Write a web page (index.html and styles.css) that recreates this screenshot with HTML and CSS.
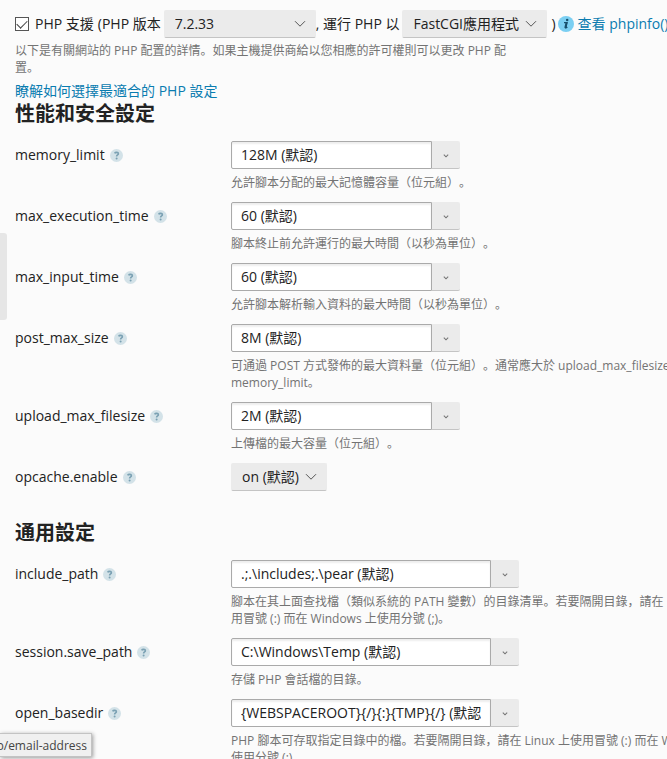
FILE: index.html
```html
<!DOCTYPE html>
<html lang="zh">
<head>
<meta charset="utf-8">
<title>PHP 設定</title>
<link rel="stylesheet" href="styles.css">
</head>
<body>
<svg class="defs" aria-hidden="true">
  <symbol id="chevron" viewBox="0 0 12 8"><path d="M1 1.2l5 5 5-5" fill="none" stroke="#555" stroke-width="1"/></symbol>
  <symbol id="caret" viewBox="0 0 6 4"><path d="M.8 .7L3 2.8 5.2 .7" fill="none" stroke="#777" stroke-width="1.1"/></symbol>
  <symbol id="help" viewBox="0 0 13 13"><circle cx="6.5" cy="6.5" r="6.5" fill="#d3e2e8"/><path d="M4.6 4.4C5.4 3 8.4 3 8.4 4.8c0 1.2-1.8 1.2-1.8 2.7" fill="none" stroke="#7ba1b3" stroke-width="1.6"/><circle cx="6.6" cy="9.4" r="1" fill="#7ba1b3"/></symbol>
  <symbol id="info" viewBox="0 0 16 16"><circle cx="8" cy="8" r="8" fill="#7bcff2"/><circle cx="9.2" cy="4.1" r="1.25" fill="#174f6c"/><path d="M6 6.7h3.1L7.7 11.9q.8 0 1.6-.9" fill="none" stroke="#174f6c" stroke-width="1.3"/><path d="M8.4 6.8L7.2 12" stroke="#174f6c" stroke-width="1.8"/></symbol>
</svg>
<main class="page">
  <div class="support">
    <input class="check" type="checkbox" id="php" checked>
    <label class="support-label" for="php">PHP 支援</label>
    <label class="before-select" for="version">(PHP 版本</label>
    <span class="select version"><select id="version"><option>7.2.33</option></select><svg><use href="#chevron"/></svg></span>
    <label class="before-select" for="handler">, 運行 PHP 以</label>
    <span class="select handler"><select id="handler"><option>FastCGI應用程式</option></select><svg><use href="#chevron"/></svg></span>
    <span class="close">)</span>
    <svg class="info"><use href="#info"/></svg>
    <a href="#phpinfo">查看 phpinfo()</a>
  </div>
  <p class="hint intro">以下是有關網站的 PHP 配置的詳情。如果主機提供商給以您相應的許可權則可以更改 PHP 配置。</p>
  <a class="learn" href="#learn">瞭解如何選擇最適合的 PHP 設定</a>

  <section>
    <h2>性能和安全設定</h2>
    <div class="row">
      <div class="name"><label for="memory">memory_limit</label><svg><use href="#help"/></svg></div>
      <div><div class="combo"><input id="memory" value="128M (默認)"><button aria-label="選項"><svg><use href="#caret"/></svg></button></div>
      <p class="hint">允許腳本分配的最大記憶體容量（位元組）。</p></div>
    </div>
    <div class="row">
      <div class="name"><label for="exec">max_execution_time</label><svg><use href="#help"/></svg></div>
      <div><div class="combo"><input id="exec" value="60 (默認)"><button aria-label="選項"><svg><use href="#caret"/></svg></button></div>
      <p class="hint">腳本終止前允許運行的最大時間（以秒為單位）。</p></div>
    </div>
    <div class="row">
      <div class="name"><label for="inputtime">max_input_time</label><svg><use href="#help"/></svg></div>
      <div><div class="combo"><input id="inputtime" value="60 (默認)"><button aria-label="選項"><svg><use href="#caret"/></svg></button></div>
      <p class="hint">允許腳本解析輸入資料的最大時間（以秒為單位）。</p></div>
    </div>
    <div class="row">
      <div class="name"><label for="post">post_max_size</label><svg><use href="#help"/></svg></div>
      <div><div class="combo"><input id="post" value="8M (默認)"><button aria-label="選項"><svg><use href="#caret"/></svg></button></div>
      <p class="hint">可通過 POST 方式發佈的最大資料量（位元組）。通常應大於 upload_max_filesize<br>memory_limit。</p></div>
    </div>
    <div class="row">
      <div class="name"><label for="upload">upload_max_filesize</label><svg><use href="#help"/></svg></div>
      <div><div class="combo"><input id="upload" value="2M (默認)"><button aria-label="選項"><svg><use href="#caret"/></svg></button></div>
      <p class="hint">上傳檔的最大容量（位元組）。</p></div>
    </div>
    <div class="row">
      <div class="name"><label for="opcache">opcache.enable</label><svg><use href="#help"/></svg></div>
      <div><span class="select opcache"><select id="opcache"><option>on (默認)</option></select><svg><use href="#chevron"/></svg></span></div>
    </div>
  </section>

  <section class="general">
    <h2>通用設定</h2>
    <div class="row">
      <div class="name"><label for="include">include_path</label><svg><use href="#help"/></svg></div>
      <div><div class="combo wide"><input id="include" value=".;.\includes;.\pear (默認)"><button aria-label="選項"><svg><use href="#caret"/></svg></button></div>
      <p class="hint">腳本在其上面查找檔（類似系統的 PATH 變數）的目錄清單。若要隔開目錄，請在<br>用冒號 (:) 而在 Windows 上使用分號 (;)。</p></div>
    </div>
    <div class="row">
      <div class="name"><label for="session">session.save_path</label><svg><use href="#help"/></svg></div>
      <div><div class="combo wide"><input id="session" value="C:\Windows\Temp (默認)"><button aria-label="選項"><svg><use href="#caret"/></svg></button></div>
      <p class="hint">存儲 PHP 會話檔的目錄。</p></div>
    </div>
    <div class="row">
      <div class="name"><label for="basedir">open_basedir</label><svg><use href="#help"/></svg></div>
      <div><div class="combo wide"><input id="basedir" value="{WEBSPACEROOT}{/}{:}{TMP}{/} (默認)"><button aria-label="選項"><svg><use href="#caret"/></svg></button></div>
      <p class="hint">PHP 腳本可存取指定目錄中的檔。若要隔開目錄，請在 Linux 上使用冒號 (:) 而在 W<br>使用分號 (;)。</p></div>
    </div>
  </section>
</main>
<div class="side-tab"></div>
<div class="status"><span>ab/email-address</span></div>
</body>
</html>
```
FILE: styles.css
```css
* { box-sizing: border-box; }
body {
  margin: 0;
  height: 100vh;
  overflow: hidden;
  background: #fbfbfb;
  color: #222;
  font: 14px/20px "Open Sans", "Noto Sans CJK SC", sans-serif;
  text-spacing-trim: space-all;
}
input, select, button { font: inherit; color: inherit; margin: 0; }
a { color: #0a7cb0; text-decoration: none; }
p, h2 { margin: 0; }
.defs { position: absolute; width: 0; height: 0; }
.page { padding: 10px 0 0 15px; }

.support { display: flex; align-items: center; height: 28px; white-space: nowrap; }
.support > * { flex: none; }
.check {
  appearance: none;
  width: 14px;
  height: 14px;
  border: 1px solid #555;
  background: #fff;
  display: grid;
  place-items: center;
}
.check:checked::before {
  content: "";
  width: 9px;
  height: 5px;
  border: solid #444;
  border-width: 0 0 1px 1px;
  transform: translateY(-1px) rotate(-45deg);
}
.support-label { margin: 0 4px 0 6px; }
.before-select { margin-right: 3px; }
.close { margin: 0 2px 0 4px; }
.info { width: 16px; height: 16px; margin-right: 4px; }

.select { position: relative; display: inline-block; height: 28px; vertical-align: top; }
.select select {
  appearance: none;
  width: 100%;
  height: 28px;
  padding: 0 10px;
  border: 1px solid #ebebeb;
  border-bottom-color: #c4c4c4;
  border-radius: 2px;
  background: #ebebeb;
}
.select svg {
  position: absolute;
  right: 10px;
  top: 10px;
  width: 12px;
  height: 8px;
  pointer-events: none;
}
.version { width: 152px; }
.handler { width: 145px; }
.opcache { width: 96px; }

.hint { color: #737373; font-size: 12px; line-height: 17px; white-space: nowrap; }
.intro { max-width: 500px; margin-top: 4px; white-space: normal; }
.learn { display: block; margin-top: 5px; }
h2 { font-size: 20px; font-weight: 700; line-height: 26px; margin-bottom: 14px; }
.general { padding-top: 18px; }

.row { display: grid; grid-template-columns: 216px 1fr; margin-bottom: 11px; }
.row .hint { margin-top: 5px; }
.name { display: flex; align-items: center; gap: 5px; height: 28px; }
.name svg { width: 13px; height: 13px; }
.combo { display: flex; width: 229px; height: 28px; }
.wide { width: 288px; }
.combo input {
  flex: 1;
  min-width: 0;
  padding: 0 9px;
  border: 1px solid #aaa;
  border-radius: 2px 0 0 2px;
  background: #fff;
  box-shadow: inset 0 2px 2px #eee;
}
.combo button {
  display: grid;
  place-items: center;
  width: 28px;
  padding: 3px 0 0;
  border: 0;
  border-bottom: 1px solid #c4c4c4;
  border-radius: 0 2px 2px 0;
  background: #ebebeb;
}
.combo svg { width: 6px; height: 4px; }

.side-tab {
  position: absolute;
  left: 0;
  top: 233px;
  width: 7px;
  height: 87px;
  border-radius: 0 3px 3px 0;
  background: #e6e6e6;
}
.status {
  position: absolute;
  left: 0;
  bottom: 2px;
  display: flex;
  justify-content: flex-end;
  width: 92px;
  height: 24px;
  padding-right: 4px;
  overflow: hidden;
  border: 1px solid #c3c3c3;
  border-left: 0;
  background: #f0f0f0;
  box-shadow: 1px 1px 4px #999;
  color: #444;
  font-size: 12px;
  line-height: 23px;
  white-space: nowrap;
}
```
